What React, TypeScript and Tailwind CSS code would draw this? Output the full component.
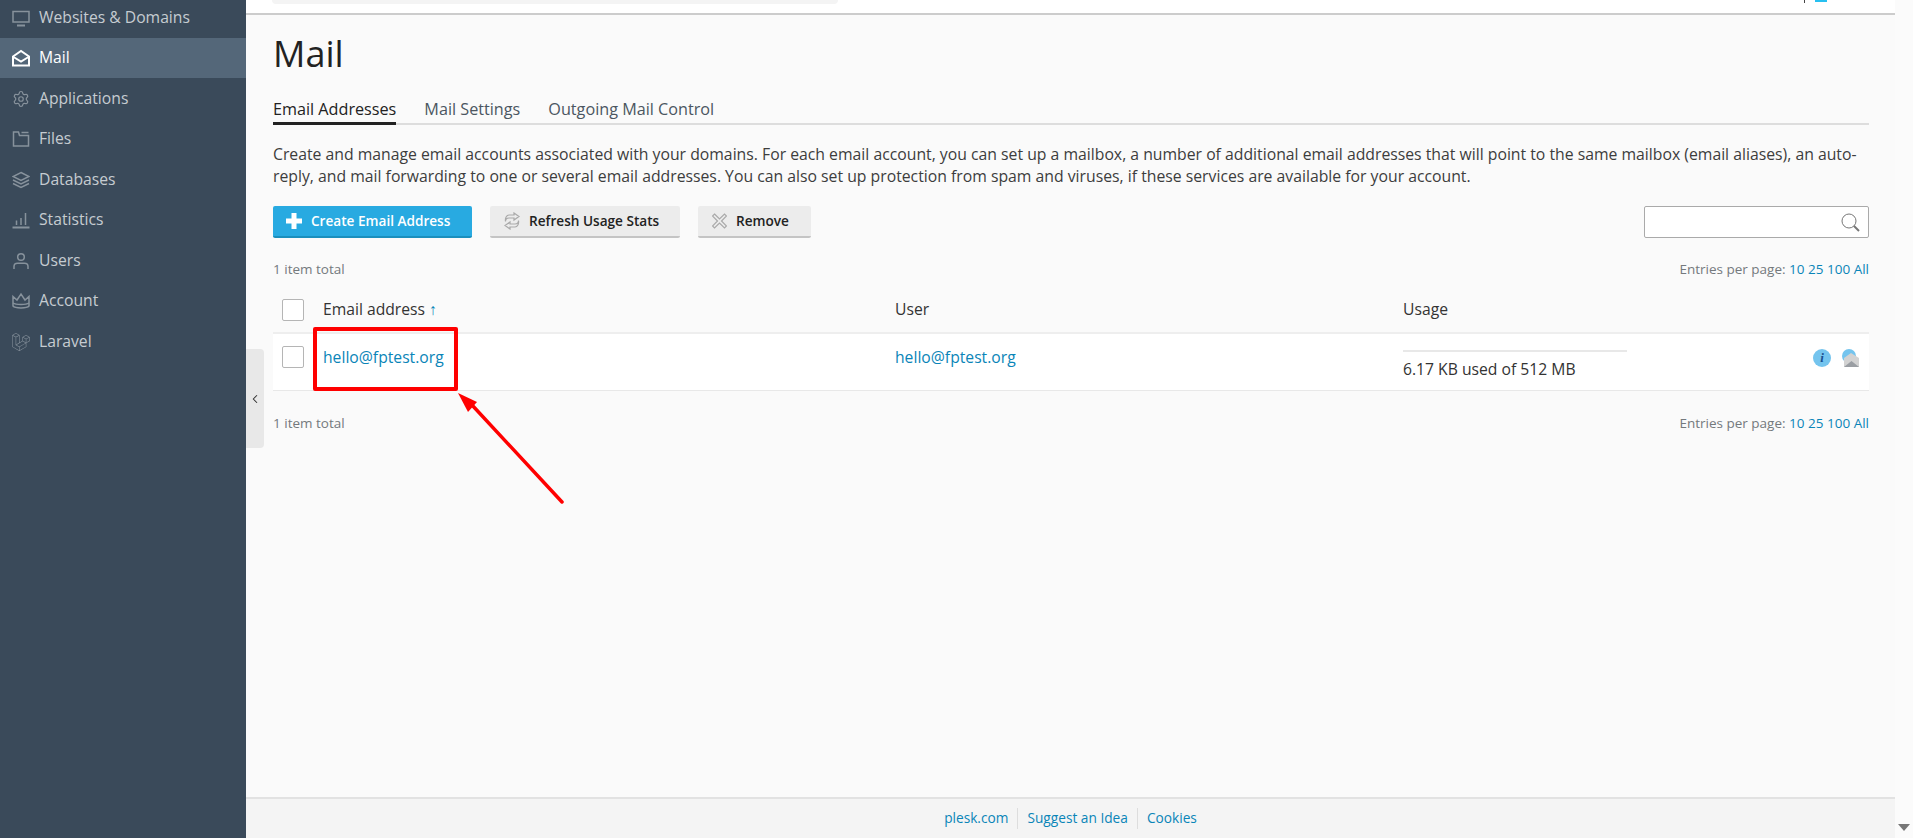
import { ChevronLeft, Settings } from "lucide-react";
import { SiLaravel } from "react-icons/si";

const iconProps = { width: 18, height: 18, viewBox: "0 0 18 18", fill: "none", stroke: "currentColor", strokeWidth: 1.5 };

const navItems = [
  {
    label: "Websites & Domains",
    icon: (
      <svg {...iconProps}>
        <path d="M1 2.500h16v10.500H1z" />
        <path d="M5 16.500h8" strokeWidth={2} />
      </svg>
    ),
  },
  {
    label: "Mail",
    icon: (
      <svg {...iconProps} strokeWidth={2}>
        <path d="M1 7.500L9 2l8 5.500V16.500H1z" />
        <path d="M1.500 8L9 12.500 16.500 8" />
      </svg>
    ),
    active: true,
  },
  { label: "Applications", icon: <Settings size={18} strokeWidth={1.6} /> },
  {
    label: "Files",
    icon: (
      <svg {...iconProps}>
        <path d="M1.500 2v14h15V5.500H7.500L6.500 2z" />
        <path d="M9.500 2.500h7" />
      </svg>
    ),
  },
  {
    label: "Databases",
    icon: (
      <svg {...iconProps}>
        <path d="M9 1.500l8 4-8 4-8-4z" />
        <path d="M1 9l8 4 8-4M1 12.500l8 4 8-4" />
      </svg>
    ),
  },
  {
    label: "Statistics",
    icon: (
      <svg {...iconProps}>
        <path d="M0.500 16.500h17" strokeWidth={2} />
        <path d="M4.500 14V9.500M9 14V7M13.500 14V2" />
      </svg>
    ),
  },
  {
    label: "Users",
    icon: (
      <svg {...iconProps}>
        <circle cx="9" cy="5" r="3.300" />
        <path d="M2 17v-2.500c0-2 1.500-3.200 3.500-3.200h7c2 0 3.500 1.200 3.500 3.200V17" />
      </svg>
    ),
  },
  {
    label: "Account",
    icon: (
      <svg {...iconProps}>
        <path d="M1 4.500l4 3.500 4-6 4 6 4-3.500V14c-2 2.500-14 2.500-16 0z" />
        <path d="M1 11c3 2 13 2 16 0" />
      </svg>
    ),
  },
  { label: "Laravel", icon: <SiLaravel size={18} /> },
];

const Entries = () => (
  <span className="text-[13.500px] text-[#74797d]">
    Entries per page: <span className="text-[#0a85b8]">10 25 100 All</span>
  </span>
);

const Checkbox = () => <div className="h-[22px] w-[22px] rounded-[2px] border border-[#b5b5b5] bg-white" />;

const App = () => {
  return (
    <div className="relative flex h-[838px] w-[1913px] overflow-hidden bg-[#fafafa] font-['Open_Sans',sans-serif] text-[15.700px] text-[#222222]">
      <aside className="w-[246px] shrink-0 bg-[#3a4a5a] text-[#c6ccd1]">
        <nav className="-mt-[3px]">
          {navItems.map((item) => (
            <div
              key={item.label}
              className={
                item.active
                  ? "flex h-[40.5px] items-center gap-[9px] bg-[#546779] pl-[12px] pt-[1px] text-white"
                  : "flex h-[40.5px] items-center gap-[9px] pl-[12px] pt-[1px]"
              }
            >
              <span className={item.active ? "flex w-[18px] justify-center text-white" : "flex w-[18px] justify-center text-[#87929c]"}>
                {item.icon}
              </span>
              {item.label}
            </div>
          ))}
        </nav>
      </aside>

      <main className="flex w-[1649px] shrink-0 flex-col">
        <div className="flex h-[15px] shrink-0 border-b-2 border-[#cccccc] bg-white pl-[26px]">
          <div className="h-[4px] w-[566px] rounded-b-[4px] bg-[#f4f4f4]" />
          <div className="ml-auto mr-[68px] flex gap-[10px]">
            <div className="h-[3px] w-[1px] bg-[#444444]" />
            <div className="h-[2px] w-[12px] bg-[#28c0f0]" />
          </div>
        </div>

        <div className="flex-1 pl-[27px] pr-[26px]">
          <h1 className="mt-[14px] text-[36px] font-normal leading-[49px] text-[#222222]">Mail</h1>

          <div className="mt-[20px] flex h-[27px] gap-[28px] border-b-2 border-[#dddddd] text-[16.200px] font-medium leading-[22px] text-[#4b5661]">
            <div className="h-[27px] border-b-[3px] border-[#222222] text-[#222222]">Email Addresses</div>
            <div>Mail Settings</div>
            <div>Outgoing Mail Control</div>
          </div>

          <p className="mt-[18px] text-[15.780px] leading-[22px] text-[#3d3d3d]">
            Create and manage email accounts associated with your domains. For each email account, you can set up a mailbox, a number of additional email addresses that will point to the same mailbox (email aliases), an auto-reply, and mail forwarding to one or several email addresses. You can also set up protection from spam and viruses, if these services are available for your account.
          </p>

          <div className="mt-[19px] flex h-[32px] items-stretch">
            <button className="flex w-[199px] items-center rounded-[2px] border-b-2 border-[#1a8fbd] bg-[#28aae1] pl-[13px] text-[13.600px] font-semibold text-white">
              <svg className="mr-[9px]" width="16" height="16" viewBox="0 0 16 16"><path d="M5.500 0h5v5.500H16v5h-5.500V16h-5v-5.500H0v-5h5.500z" fill="white" /></svg>
              Create Email Address
            </button>
            <button className="ml-[18px] flex w-[190px] items-center rounded-[2px] border-b-2 border-[#c4c4c4] bg-[#ececec] pl-[14px] text-[13.600px] font-semibold text-[#222222]">
              <svg className="mr-[9px]" width="16" height="18" viewBox="0 0 16 18" fill="none" stroke="#a9a9a9" strokeWidth="1.200">
                <path d="M10 1l5 3.500-5 3.500V6H5C3 6 1.500 7.500 1.500 9.500 1 6 2.500 3 5 3h5z" />
                <path d="M6 17l-5-3.500L6 10v2h5c2 0 3.500-1.500 3.500-3.500.5 3.500-1 6.500-3.500 6.500H6z" />
              </svg>
              Refresh Usage Stats
            </button>
            <button className="ml-[18px] flex w-[113px] items-center rounded-[2px] border-b-2 border-[#c4c4c4] bg-[#ececec] pl-[14px] text-[13.600px] font-semibold text-[#222222]">
              <svg className="mr-[9px]" width="15" height="16" viewBox="0 0 15 16" fill="none" stroke="#a9a9a9" strokeWidth="1.200">
                <path d="M2.500 1L7.500 6 12.500 1 14.500 3 9.500 8 14.500 13 12.500 15 7.500 10 2.500 15 .5 13 5.500 8 .5 3z" />
              </svg>
              Remove
            </button>
            <div className="ml-auto flex w-[225px] items-center justify-end rounded-[2px] border border-[#aaaaaa] bg-white pr-[8px]">
              <svg width="19" height="19" viewBox="0 0 19 19" fill="none" stroke="#777777" strokeWidth="1">
                <circle cx="8" cy="8" r="7" />
                <path d="M13 13l5 5" strokeWidth={2} />
              </svg>
            </div>
          </div>

          <div className="mt-[19px] flex h-[24px] items-center justify-between">
            <span className="text-[13.500px] text-[#74797d]">1 item total</span>
            <Entries />
          </div>

          <div className="mt-[4px] flex h-[49px] items-center border-b-2 border-[#eeeeee] pt-[2px] text-[#333333]">
            <div className="ml-[9px] w-[41px]"><Checkbox /></div>
            <div className="w-[572px]">Email address <span className="font-semibold text-[#0a85b8]">↑</span></div>
            <div className="w-[508px]">User</div>
            <div>Usage</div>
          </div>

          <div className="flex h-[57px] border-b border-[#e8e8e8] bg-white">
            <div className="ml-[9px] w-[41px] pt-[12px]"><Checkbox /></div>
            <div className="w-[572px] pt-[12px] text-[#0a85b8]">hello@fptest.org</div>
            <div className="w-[508px] pt-[12px] text-[#0a85b8]">hello@fptest.org</div>
            <div className="w-[224px] pt-[16px]">
              <div className="h-[2px] bg-[#e8e8e8]" />
              <div className="mt-[7px] leading-[20px] text-[#333333]">6.17 KB used of 512 MB</div>
            </div>
            <div className="ml-auto flex gap-[10px] pr-[10px] pt-[15px]">
              <div className="flex h-[18px] w-[18px] items-center justify-center rounded-full bg-[#74c4ee] font-['Liberation_Serif',serif] text-[13px] font-bold italic text-[#1a4f8f]">i</div>
              <svg width="18" height="18" viewBox="0 0 18 18">
                <circle cx="8" cy="7" r="7" fill="#74c4ee" />
                <path d="M3 9l7-5 8 5v9H3z" fill="#d2d2d2" />
                <path d="M3 18l7.500-6 7.500 6z" fill="#9a9ea3" />
              </svg>
            </div>
          </div>

          <div className="mt-[20px] flex h-[24px] items-center justify-between">
            <span className="text-[13.500px] text-[#74797d]">1 item total</span>
            <Entries />
          </div>
        </div>

        <footer className="flex h-[41px] shrink-0 items-center justify-center border-t-2 border-[#e2e2e2] bg-[#f4f4f4] text-[13.700px] text-[#0a85b8]">
          <span className="border-r border-[#dddddd] pr-[9px]">plesk.com</span>
          <span className="border-r border-[#dddddd] px-[9px]">Suggest an Idea</span>
          <span className="pl-[9px]">Cookies</span>
        </footer>
      </main>

      <div className="w-[18px] shrink-0 bg-[#fbfbfb]" />

      <div className="absolute left-[246px] top-[349px] flex h-[99px] w-[18px] items-center justify-center rounded-r-[4px] bg-[#e8e8e8] text-[#333333]">
        <ChevronLeft size={14} strokeWidth={1.800} />
      </div>

      <div className="absolute left-[313px] top-[327px] h-[64px] w-[145px] rounded-[2px] border-4 border-[#ff0000]" />
      <svg className="absolute left-[450px] top-[385px]" width="125" height="125" viewBox="0 0 125 125">
        <path d="M112 117L22 20" stroke="#ff0000" strokeWidth="3.500" strokeLinecap="round" />
        <path d="M8 8L27 17L18 27z" fill="#ff0000" />
      </svg>

      <div className="absolute bottom-[7px] right-[3px] h-0 w-0 border-x-[6px] border-t-[7px] border-x-transparent border-t-[#777777]" />
    </div>
  );
};

export default App;
